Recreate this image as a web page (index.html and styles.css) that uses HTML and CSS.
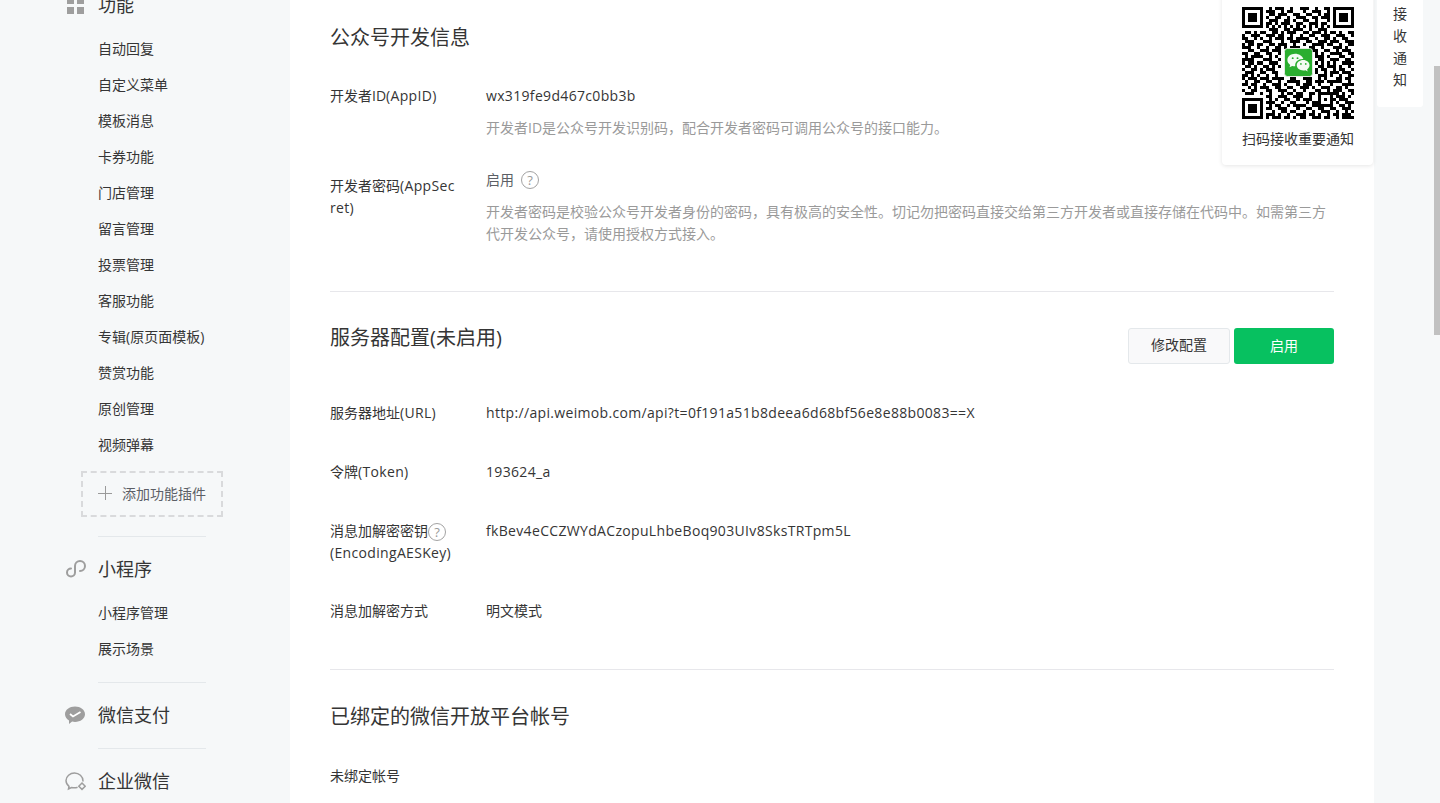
FILE: index.html
```html
<!DOCTYPE html>
<html lang="zh-CN">
<head>
<meta charset="utf-8">
<title>基本配置</title>
<link rel="stylesheet" href="styles.css">
</head>
<body>
<div class="page">
  <aside class="sidebar">
    <nav class="nav">
      <div class="nav-group nav-group--first">
        <div class="nav-head">
          <svg class="nav-icon" viewBox="0 0 22 22"><path fill="#9e9e9e" d="M3 3h7v7H3zM13 3h7v7h-7zM3 13h7v7H3zM13 13h7v7h-7z"/></svg>
          <span>功能</span>
        </div>
        <a class="nav-item">自动回复</a>
        <a class="nav-item">自定义菜单</a>
        <a class="nav-item">模板消息</a>
        <a class="nav-item">卡券功能</a>
        <a class="nav-item">门店管理</a>
        <a class="nav-item">留言管理</a>
        <a class="nav-item">投票管理</a>
        <a class="nav-item">客服功能</a>
        <a class="nav-item">专辑(原页面模板)</a>
        <a class="nav-item">赞赏功能</a>
        <a class="nav-item">原创管理</a>
        <a class="nav-item">视频弹幕</a>
        <div class="add-plugin">
          <svg class="plus" viewBox="0 0 14 14"><path stroke="#9a9a9a" fill="none" d="M7.500 0v14M0 7.500h14"/></svg>
          <span>添加功能插件</span>
        </div>
      </div>
      <div class="nav-group">
        <div class="nav-head">
          <svg class="nav-icon" viewBox="0 0 22 22"><path fill="none" stroke="#9e9e9e" stroke-width="2" stroke-linecap="round" d="M11 8v6.500a4 4 0 1 1-4-4M11 8a5 5 0 1 1 5 5"/></svg>
          <span>小程序</span>
        </div>
        <a class="nav-item">小程序管理</a>
        <a class="nav-item">展示场景</a>
      </div>
      <div class="nav-group">
        <div class="nav-head">
          <svg class="nav-icon" viewBox="0 0 22 22"><path fill="#9e9e9e" d="M11 2.500c5.500 0 10 3.300 10 7.700s-4.500 7.700-10 7.700c-1 0-2-.1-2.900-.4L5 20v-3.500C2.600 15 1 12.800 1 10.200 1 5.800 5.500 2.500 11 2.500z"/><path fill="none" stroke="#fff" stroke-width="1.800" d="M6 10l3 2.500 7.500-4.500"/></svg>
          <span>微信支付</span>
        </div>
      </div>
      <div class="nav-group">
        <div class="nav-head">
          <svg class="nav-icon" viewBox="0 0 22 22"><path fill="none" stroke="#9e9e9e" stroke-width="1.500" stroke-linecap="round" d="M19 11C19 6.500 15 3 10.500 3S2 6.400 2 10.500c0 2.400 1.200 4.400 3 5.800L4.500 19l3-1.500c1.600.4 3.500.5 5.500.1"/><path fill="none" stroke="#9e9e9e" stroke-width="1.500" d="M18 13l3.200 3.200-3.200 3.200-3.200-3.200z"/></svg>
          <span>企业微信</span>
        </div>
      </div>
    </nav>
  </aside>

  <main class="main">
    <section class="section section--first">
      <h2 class="section-title">公众号开发信息</h2>
      <div class="row row--appid">
        <div class="label">开发者ID<span class="en">(AppID)</span></div>
        <div class="value">
          <div class="value-line en">wx319fe9d467c0bb3b</div>
          <p class="desc">开发者ID是公众号开发识别码，配合开发者密码可调用公众号的接口能力。</p>
        </div>
      </div>
      <div class="row row--secret">
        <div class="label label--low">开发者密码<span class="en">(AppSec</span><br><span class="en">ret)</span></div>
        <div class="value">
          <div class="value-line value-line--status">启用<span class="help help--gap">?</span></div>
          <p class="desc">开发者密码是校验公众号开发者身份的密码，具有极高的安全性。切记勿把密码直接交给第三方开发者或直接存储在代码中。如需第三方代开发公众号，请使用授权方式接入。</p>
        </div>
      </div>
    </section>

    <section class="section">
      <div class="section-head">
        <h2 class="section-title">服务器配置(未启用)</h2>
        <div class="actions">
          <button class="btn btn--default">修改配置</button>
          <button class="btn btn--primary">启用</button>
        </div>
      </div>
      <div class="row">
        <div class="label">服务器地址<span class="en">(URL)</span></div>
        <div class="value"><div class="value-line en">http://api.weimob.com/api?t=0f191a51b8deea6d68bf56e8e88b0083==X</div></div>
      </div>
      <div class="row">
        <div class="label">令牌<span class="en">(Token)</span></div>
        <div class="value"><div class="value-line en">193624_a</div></div>
      </div>
      <div class="row row--aes">
        <div class="label">消息加解密密钥<span class="help">?</span><br><span class="en">(EncodingAESKey)</span></div>
        <div class="value"><div class="value-line en">fkBev4eCCZWYdACzopuLhbeBoq903UIv8SksTRTpm5L</div></div>
      </div>
      <div class="row">
        <div class="label">消息加解密方式</div>
        <div class="value"><div class="value-line">明文模式</div></div>
      </div>
    </section>

    <section class="section section--last">
      <h2 class="section-title section-title--bound">已绑定的微信开放平台帐号</h2>
      <div class="row">
        <div class="label">未绑定帐号</div>
      </div>
    </section>
  </main>
</div>

<div class="qr-card">
  <div class="qr">
    <svg class="qr-code" viewBox="0 0 37 37" shape-rendering="crispEdges">
      <path fill="none" stroke="#000" d="M0 .5h7M9 .5h1M11 .5h3M16 .5h1M19 .5h3M24 .5h1M27 .5h2M30 .5h7
      M0 1.500h1M6 1.500h1M8 1.500h3M13 1.500h1M15 1.500h2M20 1.500h1M23 1.500h3M28 1.500h1M30 1.500h1M36 1.500h1
      M0 2.500h1M2 2.500h3M6 2.500h1M9 2.500h2M12 2.500h3M17 2.500h2M21 2.500h2M25 2.500h1M27 2.500h2M30 2.500h1M32 2.500h3M36 2.500h1
      M0 3.500h1M2 3.500h3M6 3.500h1M8 3.500h1M11 3.500h2M15 3.500h1M18 3.500h3M23 3.500h2M26 3.500h3M30 3.500h1M32 3.500h3M36 3.500h1
      M0 4.500h1M2 4.500h3M6 4.500h1M9 4.500h3M14 4.500h2M17 4.500h1M20 4.500h2M24 4.500h1M28 4.500h1M30 4.500h1M32 4.500h3M36 4.500h1
      M0 5.500h1M6 5.500h1M8 5.500h2M11 5.500h1M13 5.500h3M18 5.500h2M22 5.500h3M26 5.500h2M30 5.500h1M36 5.500h1
      M0 6.500h7M8 6.500h1M10 6.500h1M12 6.500h1M14 6.500h1M16 6.500h1M18 6.500h1M20 6.500h1M22 6.500h1M24 6.500h1M26 6.500h1M28 6.500h1M30 6.500h7
      M9 7.500h3M14 7.500h2M17 7.500h3M22 7.500h1M25 7.500h3
      M1 8.500h2M4 8.500h1M6 8.500h2M10 8.500h2M13 8.500h1M15 8.500h3M20 8.500h2M23 8.500h3M27 8.500h1M29 8.500h2M32 8.500h1M35 8.500h2
      M0 9.500h1M3 9.500h3M8 9.500h3M12 9.500h2M16 9.500h1M19 9.500h1M22 9.500h2M26 9.500h3M31 9.500h3M36 9.500h1
      M0 10.500h2M4 10.500h1M6 10.500h1M9 10.500h1M11 10.500h3M15 10.500h2M18 10.500h4M24 10.500h1M27 10.500h2M30 10.500h1M33 10.500h2
      M1 11.500h3M7 11.500h3M13 11.500h1M16 11.500h3M21 11.500h2M25 11.500h3M29 11.500h3M34 11.500h3
      M0 12.500h1M2 12.500h2M5 12.500h2M9 12.500h2M12 12.500h3M17 12.500h1M20 12.500h1M23 12.500h4M28 12.500h2M32 12.500h1M35 12.500h2
      M0 13.500h3M5 13.500h1M8 13.500h1M11 13.500h2M14 13.500h1M16 13.500h3M22 13.500h2M26 13.500h1M30 13.500h3M34 13.500h1
      M2 14.500h2M6 14.500h3M10 14.500h3M23 14.500h2M27 14.500h2M31 14.500h1M33 14.500h3
      M0 15.500h2M4 15.500h2M8 15.500h2M12 15.500h1M24 15.500h1M26 15.500h1M29 15.500h4M35 15.500h2
      M1 16.500h1M3 16.500h3M6 16.500h1M9 16.500h1M11 16.500h1M24 16.500h3M28 16.500h1M32 16.500h2M36 16.500h1
      M0 17.500h4M7 17.500h3M12 17.500h1M25 17.500h2M29 17.500h3M34 17.500h2
      M0 18.500h1M2 18.500h2M5 18.500h2M9 18.500h3M24 18.500h1M26 18.500h1M28 18.500h1M30 18.500h1M33 18.500h4
      M1 19.500h2M4 19.500h1M7 19.500h2M10 19.500h1M12 19.500h1M25 19.500h2M28 19.500h3M32 19.500h1M35 19.500h1
      M0 20.500h1M3 20.500h2M6 20.500h1M8 20.500h3M24 20.500h1M26 20.500h2M30 20.500h1M32 20.500h2M36 20.500h1
      M1 21.500h3M6 21.500h2M10 21.500h2M24 21.500h1M27 21.500h1M29 21.500h3M33 21.500h3
      M0 22.500h2M3 22.500h1M5 22.500h1M8 22.500h1M11 22.500h1M25 22.500h3M29 22.500h1M32 22.500h1M35 22.500h2
      M0 23.500h1M2 23.500h3M6 23.500h3M10 23.500h4M16 23.500h2M20 23.500h3M25 23.500h1M27 23.500h1M31 23.500h2M34 23.500h2
      M1 24.500h1M4 24.500h2M8 24.500h2M12 24.500h1M15 24.500h4M21 24.500h2M24 24.500h3M28 24.500h5M35 24.500h1
      M0 25.500h2M3 25.500h2M7 25.500h1M10 25.500h3M14 25.500h1M18 25.500h1M20 25.500h3M25 25.500h1M29 25.500h1M33 25.500h4
      M2 26.500h1M4 26.500h1M6 26.500h3M11 26.500h2M15 26.500h2M19 26.500h3M23 26.500h1M26 26.500h3M31 26.500h2M34 26.500h1
      M0 27.500h1M3 27.500h2M8 27.500h2M12 27.500h3M17 27.500h1M20 27.500h1M24 27.500h2M28 27.500h1M30 27.500h3M35 27.500h2
      M1 28.500h3M6 28.500h1M9 28.500h1M13 28.500h1M15 28.500h2M18 28.500h2M22 28.500h2M25 28.500h7M33 28.500h1M36 28.500h1
      M8 29.500h2M12 29.500h3M17 29.500h3M22 29.500h1M25 29.500h1M29 29.500h1M31 29.500h3M35 29.500h1
      M0 30.500h7M9 30.500h1M11 30.500h1M14 30.500h2M18 30.500h1M20 30.500h3M25 30.500h1M27 30.500h1M29 30.500h2M32 30.500h3
      M0 31.500h1M6 31.500h1M8 31.500h3M13 31.500h1M16 31.500h2M21 31.500h1M23 31.500h2M25 31.500h1M29 31.500h1M31 31.500h1M34 31.500h3
      M0 32.500h1M2 32.500h3M6 32.500h1M9 32.500h1M11 32.500h2M15 32.500h1M17 32.500h4M23 32.500h7M32 32.500h2M35 32.500h1
      M0 33.500h1M2 33.500h3M6 33.500h1M8 33.500h2M12 33.500h3M18 33.500h1M21 33.500h2M25 33.500h2M29 33.500h2M33 33.500h3
      M0 34.500h1M2 34.500h3M6 34.500h1M10 34.500h1M13 34.500h2M16 34.500h2M20 34.500h1M23 34.500h1M26 34.500h3M31 34.500h1M34 34.500h1M36 34.500h1
      M0 35.500h1M6 35.500h1M8 35.500h3M12 35.500h1M15 35.500h1M18 35.500h3M22 35.500h2M25 35.500h1M28 35.500h1M30 35.500h2M33 35.500h3
      M0 36.500h7M8 36.500h1M10 36.500h3M14 36.500h2M17 36.500h1M19 36.500h2M23 36.500h3M27 36.500h2M31 36.500h1M33 36.500h4"/>
    </svg>
    <svg class="qr-logo" viewBox="0 0 30 30">
      <rect x=".5" y=".5" width="29" height="29" rx="3" fill="#2aae2f" stroke="#e6ebe6"/>
      <path fill="#f4fbf4" d="M11.500 6C7 6 3.500 8.900 3.500 12.500c0 2 1.100 3.800 2.900 5L5.700 20l2.800-1.500c1 .3 2 .4 3.100.4C11 14 15 11 20 11.300 19 8.200 15.500 6 11.500 6z"/>
      <path fill="#f4fbf4" d="M20 12.500c-3.800 0-6.800 2.400-6.800 5.400s3 5.400 6.800 5.400c.8 0 1.600-.1 2.300-.3l2.200 1.200-.6-2c1.500-1 2.500-2.600 2.500-4.300 0-3-3-5.400-6.400-5.400z"/>
      <circle cx="9" cy="10.500" r="1" fill="#2aae2f"/><circle cx="14" cy="10.500" r="1" fill="#2aae2f"/>
      <circle cx="17.500" cy="16.500" r=".9" fill="#2aae2f"/><circle cx="22.500" cy="16.500" r=".9" fill="#2aae2f"/>
    </svg>
  </div>
  <div class="qr-text">扫码接收重要通知</div>
</div>

<div class="notice-tab">接收通知</div>
<div class="scroll-thumb"></div>
</body>
</html>
```
FILE: styles.css
```css
* { box-sizing: border-box; }
html, body { margin: 0; padding: 0; height: 100%; overflow: hidden; }
body {
  background: #f6f8f9;
  color: #353535;
  font-family: "Open Sans", "Noto Sans CJK SC", sans-serif;
  font-size: 14px;
  position: relative;
}
.page { display: flex; align-items: flex-start; width: 1374px; height: 803px; overflow: hidden; }
.en { letter-spacing: .33px; }

/* sidebar */
.sidebar { width: 290px; flex: none; padding-left: 98px; }
.nav { margin-top: -13px; width: 108px; }
.nav-group { width: 108px; margin-bottom: 15px; }
.nav-group + .nav-group { border-top: 1px solid #e4e8eb; padding-top: 14px; }
.nav-group--first { margin-bottom: 0; }
.nav-head {
  position: relative;
  height: 36px;
  line-height: 36px;
  font-size: 18px;
  margin-bottom: 8px;
  white-space: nowrap;
}
.nav-icon { position: absolute; left: -34px; top: 7px; width: 22px; height: 22px; }
.nav-item { display: block; height: 36px; line-height: 36px; white-space: nowrap; font-size: 14px; }
.add-plugin {
  display: flex;
  align-items: center;
  gap: 10px;
  width: 142px;
  height: 46px;
  margin: 8px 0 19px -17px;
  padding: 0 0 2px 15px;
  border: 2px dashed #d9dadc;
  color: #5c5f66;
  white-space: nowrap;
}
.plus { width: 14px; height: 14px; flex: none; }

/* main panel */
.main { width: 1084px; flex: none; background: #fff; padding: 0 40px; min-height: 803px; }
.section { padding: 26px 0 10px; border-bottom: 1px solid #e7e7eb; }
.section--first { padding-top: 18px; }
.section--first .section-title { margin-bottom: 27px; }
.section--last { border-bottom: 0; }
.section--last .section-title { position: relative; top: 1px; }
.section-title { margin: 0 0 28px; font-size: 20px; font-weight: 400; line-height: 40px; height: 40px; white-space: nowrap; }
.section-title--bound { margin-bottom: 29px; }
.section-head { display: flex; justify-content: space-between; align-items: flex-start; margin-bottom: 38px; height: 46px; }
.section-head .section-title { margin: 0; }
.actions { display: flex; gap: 4px; margin-top: 10px; }
.btn { height: 36px; border-radius: 3px; font: inherit; padding: 0 0 3px; }
.btn--default { width: 102px; background: #f9f9fa; border: 1px solid #e4e8eb; color: #353535; padding-bottom: 5px; }
.btn--primary { width: 100px; background: #07c160; border: 0; color: #fff; }

.row { display: flex; margin-bottom: 37px; line-height: 22px; }
.row--appid { margin-bottom: 30px; }
.row--secret { margin-bottom: 36px; }
.row--aes { margin-bottom: 36px; }
.label { width: 156px; flex: none; padding-right: 20px; white-space: nowrap; }
.label--low { padding-top: 6px; }
.value { flex: 1; min-width: 0; }
.value-line { white-space: nowrap; }
.value-line--status { display: flex; align-items: center; color: #5c5f66; height: 20px; margin: 1px 0 11px; }
.desc { margin: 10px 0 0; color: #9a9a9a; font-size: 14px; line-height: 22px; }
.help {
  display: inline-block;
  width: 18px;
  height: 18px;
  margin: -4px 0;
  border: 1px solid #a3a3a3;
  border-radius: 50%;
  color: #9a9a9a;
  font-size: 13px;
  line-height: 16px;
  text-align: center;
  vertical-align: middle;
}
.help--gap { margin: 0 0 0 7px; }

/* floating items */
.qr-card {
  position: absolute;
  left: 1222px;
  top: -10px;
  width: 151px;
  height: 175px;
  background: #fff;
  border-radius: 4px;
  box-shadow: 0 1px 4px rgba(0, 0, 0, .1);
  padding: 17px 0 0 20px;
}
.qr { position: relative; width: 112px; height: 112px; }
.qr-code { display: block; width: 112px; height: 112px; filter: blur(.35px); }
.qr-logo { position: absolute; left: 42px; top: 41px; width: 29px; height: 29px; }
.qr-text { margin-top: 9px; line-height: 22px; font-size: 14px; white-space: nowrap; width: 112px; }
.notice-tab {
  position: absolute;
  left: 1377px;
  top: 0;
  width: 46px;
  height: 107px;
  background: #fff;
  border-radius: 0 0 3px 3px;
  padding: 3px 16px 0;
  line-height: 22px;
  font-size: 14px;
}
.scroll-thumb { position: absolute; left: 1434px; top: 66px; width: 6px; height: 269px; background: #c1c1c1; }
```
